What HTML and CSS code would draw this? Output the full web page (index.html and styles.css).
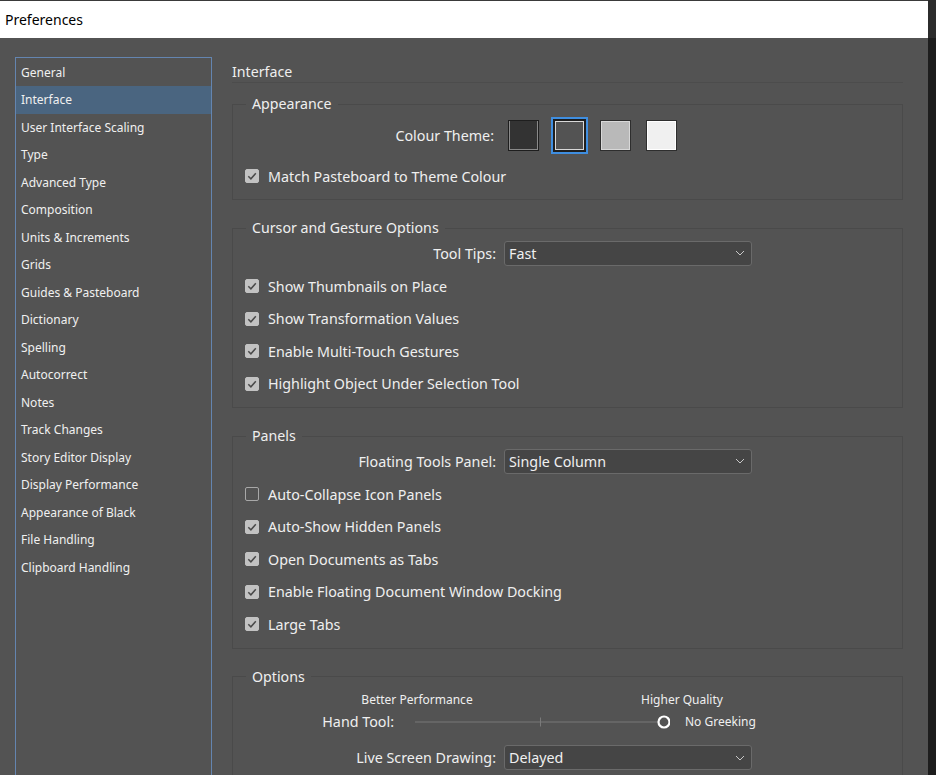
FILE: index.html
```html
<!DOCTYPE html>
<html lang="en">
<head>
<meta charset="utf-8">
<title>Preferences</title>
<link rel="stylesheet" href="styles.css">
</head>
<body>
<div class="window">
  <div class="titlebar">Preferences</div>
  <div class="main">
    <ul class="sidebar">
      <li>General</li>
      <li class="active">Interface</li>
      <li>User Interface Scaling</li>
      <li>Type</li>
      <li>Advanced Type</li>
      <li>Composition</li>
      <li>Units &amp; Increments</li>
      <li>Grids</li>
      <li>Guides &amp; Pasteboard</li>
      <li>Dictionary</li>
      <li>Spelling</li>
      <li>Autocorrect</li>
      <li>Notes</li>
      <li>Track Changes</li>
      <li>Story Editor Display</li>
      <li>Display Performance</li>
      <li>Appearance of Black</li>
      <li>File Handling</li>
      <li>Clipboard Handling</li>
    </ul>
    <div class="content">
      <div class="heading">Interface</div>

      <fieldset class="group g-appearance">
        <legend>Appearance</legend>
        <div class="frow theme-row">
          <span class="flabel theme-label">Colour Theme:</span>
          <div class="swatches">
            <span class="swatch sw-dark"></span>
            <span class="swatch sw-medium selected"></span>
            <span class="swatch sw-light"></span>
            <span class="swatch sw-white"></span>
          </div>
        </div>
        <div class="crow tall"><span class="cb checked"><svg viewBox="0 0 14 14" width="14" height="14"><path d="M3.3 7.2 L5.9 9.8 L10.8 4.3" fill="none" stroke="#4a4a4a" stroke-width="1.5"/></svg></span>Match Pasteboard to Theme Colour</div>
      </fieldset>

      <fieldset class="group">
        <legend>Cursor and Gesture Options</legend>
        <div class="frow">
          <span class="flabel">Tool Tips:</span>
          <div class="select"><span>Fast</span><svg viewBox="0 0 10 6" width="10" height="6"><polyline points="1,1 5,5 9,1" fill="none" stroke="#c8c8c8" stroke-width="1"/></svg></div>
        </div>
        <div class="crow"><span class="cb checked"><svg viewBox="0 0 14 14" width="14" height="14"><path d="M3.3 7.2 L5.9 9.8 L10.8 4.3" fill="none" stroke="#4a4a4a" stroke-width="1.5"/></svg></span>Show Thumbnails on Place</div>
        <div class="crow"><span class="cb checked"><svg viewBox="0 0 14 14" width="14" height="14"><path d="M3.3 7.2 L5.9 9.8 L10.8 4.3" fill="none" stroke="#4a4a4a" stroke-width="1.5"/></svg></span>Show Transformation Values</div>
        <div class="crow"><span class="cb checked"><svg viewBox="0 0 14 14" width="14" height="14"><path d="M3.3 7.2 L5.9 9.8 L10.8 4.3" fill="none" stroke="#4a4a4a" stroke-width="1.5"/></svg></span>Enable Multi-Touch Gestures</div>
        <div class="crow"><span class="cb checked"><svg viewBox="0 0 14 14" width="14" height="14"><path d="M3.3 7.2 L5.9 9.8 L10.8 4.3" fill="none" stroke="#4a4a4a" stroke-width="1.5"/></svg></span>Highlight Object Under Selection Tool</div>
      </fieldset>

      <fieldset class="group">
        <legend>Panels</legend>
        <div class="frow">
          <span class="flabel">Floating Tools Panel:</span>
          <div class="select"><span>Single Column</span><svg viewBox="0 0 10 6" width="10" height="6"><polyline points="1,1 5,5 9,1" fill="none" stroke="#c8c8c8" stroke-width="1"/></svg></div>
        </div>
        <div class="crow"><span class="cb"></span>Auto-Collapse Icon Panels</div>
        <div class="crow"><span class="cb checked"><svg viewBox="0 0 14 14" width="14" height="14"><path d="M3.3 7.2 L5.9 9.8 L10.8 4.3" fill="none" stroke="#4a4a4a" stroke-width="1.5"/></svg></span>Auto-Show Hidden Panels</div>
        <div class="crow"><span class="cb checked"><svg viewBox="0 0 14 14" width="14" height="14"><path d="M3.3 7.2 L5.9 9.8 L10.8 4.3" fill="none" stroke="#4a4a4a" stroke-width="1.5"/></svg></span>Open Documents as Tabs</div>
        <div class="crow"><span class="cb checked"><svg viewBox="0 0 14 14" width="14" height="14"><path d="M3.3 7.2 L5.9 9.8 L10.8 4.3" fill="none" stroke="#4a4a4a" stroke-width="1.5"/></svg></span>Enable Floating Document Window Docking</div>
        <div class="crow"><span class="cb checked"><svg viewBox="0 0 14 14" width="14" height="14"><path d="M3.3 7.2 L5.9 9.8 L10.8 4.3" fill="none" stroke="#4a4a4a" stroke-width="1.5"/></svg></span>Large Tabs</div>
      </fieldset>

      <fieldset class="group g-options">
        <legend>Options</legend>
        <div class="perf-row">
          <span class="perf-label">Better Performance</span>
          <span class="perf-label perf-high">Higher Quality</span>
        </div>
        <div class="hand-row">
          <span class="hand-label">Hand Tool:</span>
          <svg class="slider" viewBox="0 0 255 14" width="255" height="14">
            <line x1="0" y1="7" x2="243" y2="7" stroke="#787878" stroke-width="1"/>
            <line x1="125.5" y1="2.5" x2="125.5" y2="11.5" stroke="#7a7a7a" stroke-width="1"/>
            <circle cx="249" cy="7" r="5.5" fill="#535353" stroke="#ffffff" stroke-width="2.2"/>
          </svg>
          <span class="small">No Greeking</span>
        </div>
        <div class="frow live-row">
          <span class="flabel">Live Screen Drawing:</span>
          <div class="select"><span>Delayed</span><svg viewBox="0 0 10 6" width="10" height="6"><polyline points="1,1 5,5 9,1" fill="none" stroke="#c8c8c8" stroke-width="1"/></svg></div>
        </div>
      </fieldset>
    </div>
  </div>
</div>
<div class="edge"></div>
</body>
</html>
```

FILE: styles.css
```css
* { box-sizing: border-box; }
html, body { margin: 0; padding: 0; }
body {
  width: 936px;
  height: 775px;
  overflow: hidden;
  display: flex;
  background: #535353;
  font-family: "Noto Sans", "Open Sans", sans-serif;
  color: #efefef;
}
.window {
  width: 928px;
  height: 775px;
  overflow: hidden;
  display: flex;
  flex-direction: column;
  background: #535353;
}
.edge {
  width: 8px;
  height: 775px;
  background: linear-gradient(#2c2c2c 0, #2c2c2c 38px, #1d1d1d 38px);
}
.titlebar {
  height: 38px;
  flex: none;
  background: #ffffff;
  border-top: 1px solid #3a3a3a;
  color: #000;
  font-size: 14px;
  line-height: 38px;
  padding-left: 5px;
}
.main {
  display: flex;
  padding: 19px 0 0 15px;
  flex: 1;
  min-height: 0;
  overflow: hidden;
}
.sidebar {
  list-style: none;
  margin: 0;
  padding: 0.5px 0 0 0;
  width: 197px;
  height: 740px;
  flex: none;
  border: 1px solid #6485b0;
  font-size: 12px;
  color: #f0f0f0;
}
.sidebar li {
  height: 27.5px;
  line-height: 27.5px;
  padding-left: 5px;
  white-space: nowrap;
}
.sidebar li.active { background: #4a6580; }
.content {
  width: 671px;
  margin-left: 20px;
  display: flex;
  flex-direction: column;
}
.heading {
  font-size: 14.2px;
  line-height: 20px;
  padding-top: 5px;
  height: 27px;
  border-bottom: 1px solid #4c4c4c;
}
.group {
  margin: 13px 0 0 0;
  padding: 0 0 7px 0;
  border: 1px solid #4a4a4a;
  min-width: 0;
}
.group + .group { margin-top: 20px; }
.group legend {
  margin-left: 13px;
  padding: 0 6px;
  font-size: 14.2px;
  line-height: 16px;
}
.g-appearance { padding: 2px 0 3px 0; }
.frow {
  display: grid;
  grid-template-columns: 263px 248px;
  column-gap: 8px;
  align-items: center;
  height: 34px;
  font-size: 14.3px;
}
.flabel { text-align: right; white-space: nowrap; }
.theme-row { height: 42px; }
.theme-label { padding-right: 2px; }
.swatches {
  display: flex;
  gap: 15px;
  margin-left: 4px;
}
.swatch {
  width: 31px;
  height: 31px;
  flex: none;
  border: 1px solid #1e1e1e;
}
.sw-dark { background: #333333; box-shadow: inset 1px 0 0 #8a8a8a, inset -1px 0 0 #8a8a8a, inset 0 -1px 0 #8a8a8a; }
.sw-medium { background: #535353; box-shadow: inset 0 0 0 1px #d8d8d8, 0 0 0 1px #1e1e1e, 0 0 0 3px #3f8ee0; border-color: #1e1e1e; }
.sw-light { background: #b9b9b9; border-color: #2e2e2e; box-shadow: inset 0 0 0 1px #d8d8d8; }
.sw-white { background: #f0f0f0; border-color: #2e2e2e; box-shadow: inset 0 0 0 1px #ffffff; }
.crow {
  display: flex;
  align-items: center;
  height: 32.5px;
  padding-left: 12px;
  font-size: 14.3px;
  white-space: nowrap;
}
.crow.tall { height: 40px; }
.cb {
  width: 14px;
  height: 14px;
  flex: none;
  margin-right: 9px;
  border: 1px solid #a8a8a8;
  border-radius: 2px;
  display: flex;
}
.cb.checked {
  background: #c2c2c2;
  border-color: #c2c2c2;
}
.cb svg { margin: -1px; }
.select {
  height: 25px;
  border: 1px solid #6a6a6a;
  border-radius: 3px;
  background: #454545;
  display: flex;
  align-items: center;
  justify-content: space-between;
  padding: 0 6px 0 4px;
  color: #f0f0f0;
}
.perf-row {
  display: flex;
  height: 18px;
  margin-top: 6px;
  padding-left: 104px;
  gap: 105px;
  font-size: 12px;
  align-items: center;
}
.perf-label { width: 160px; text-align: center; }
.hand-row {
  display: flex;
  align-items: center;
  height: 26px;
  font-size: 14.3px;
}
.hand-label { width: 161px; text-align: right; margin-right: 21px; }
.slider { flex: none; margin-right: 15px; }
.small { font-size: 12px; }
.live-row { height: 46px; }
.g-options { padding-bottom: 0; }
```
